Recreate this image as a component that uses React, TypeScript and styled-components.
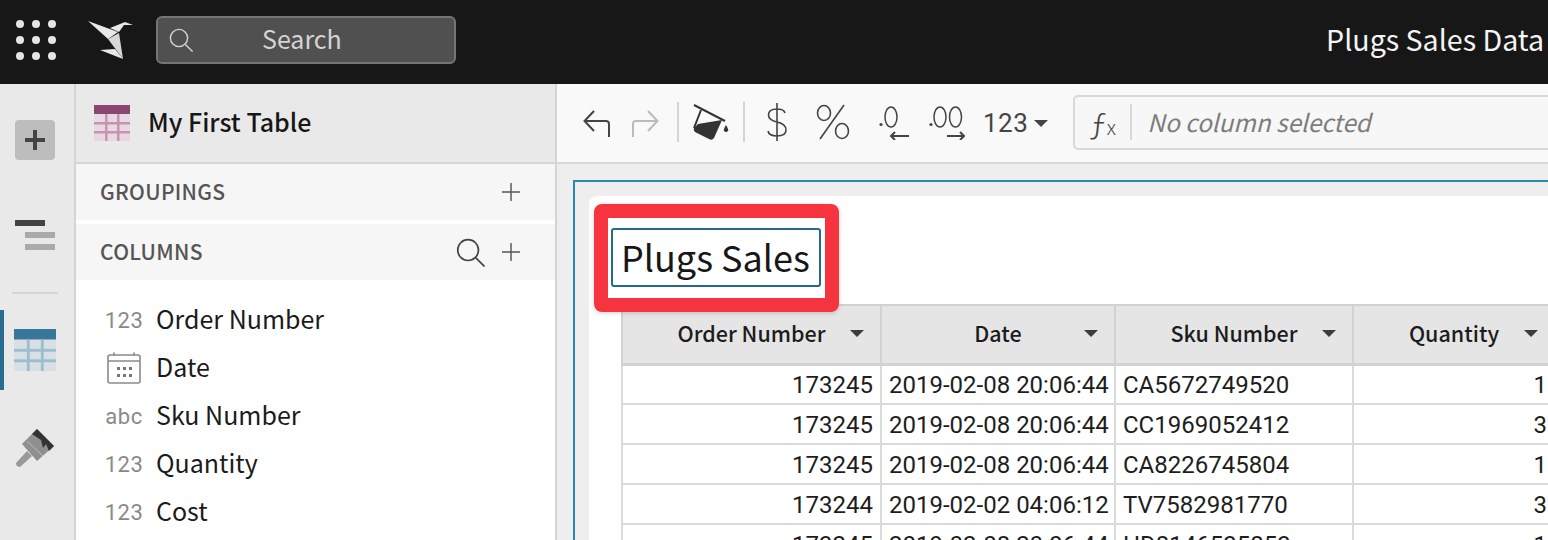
import React from 'react';
import styled, { createGlobalStyle } from 'styled-components';

const SANS = `"Noto Sans CJK JP", "Noto Sans", sans-serif`;
const CELL = `Roboto, "Noto Sans", sans-serif`;

const GlobalStyle = createGlobalStyle`
  html, body {
    margin: 0;
    padding: 0;
    width: 1548px;
    height: 540px;
    overflow: hidden;
    background: #fff;
    font-family: ${SANS};
  }
  * { box-sizing: border-box; }
`;

const Page = styled.div`
  width: 1548px;
  height: 540px;
  display: flex;
  flex-direction: column;
  overflow: hidden;
`;

const TopBar = styled.header`
  height: 84px;
  flex: none;
  background: #171717;
  display: flex;
  align-items: center;
  padding: 0 0 4px 16px;
`;

const SearchBox = styled.div`
  width: 300px;
  height: 48px;
  margin-left: 22px;
  background: #505050;
  border: 2px solid #757575;
  border-radius: 6px;
  display: flex;
  align-items: center;
  padding-left: 11px;
  color: #d4d4d4;
`;

const SearchLabel = styled.span`
  font-size: 25px;
  margin-left: 69px;
  padding-bottom: 4px;
`;

const DocTitle = styled.div`
  margin-left: auto;
  margin-right: 4px;
  padding-bottom: 4px;
  color: #f4f4f4;
  font-size: 28.6px;
  white-space: nowrap;
`;

const Body = styled.div`
  flex: 1;
  display: flex;
  min-height: 0;
`;

const Rail = styled.nav`
  width: 76px;
  flex: none;
  background: #e9e9e9;
  border-right: 2px solid #d4d4d4;
  display: flex;
  flex-direction: column;
  align-items: center;
`;

const AddButton = styled.div`
  width: 40px;
  height: 40px;
  margin-top: 36px;
  margin-right: 4px;
  background: #bdbdbd;
  border-radius: 4px;
  display: flex;
  align-items: center;
  justify-content: center;
`;

const RailIcon = styled.div<{ $top: number }>`
  width: 100%;
  margin-top: ${(p) => p.$top}px;
  padding-right: 4px;
  display: flex;
  justify-content: center;
`;

const RailActive = styled.div`
  width: 100%;
  height: 80px;
  margin-top: 16px;
  padding-right: 8px;
  border-left: 4px solid #2a6d8f;
  display: flex;
  align-items: center;
  justify-content: center;
`;

const RailDivider = styled.div`
  width: 46px;
  height: 2px;
  background: #d6d6d6;
  margin-top: 42px;
  margin-right: 4px;
`;

const Panel = styled.aside`
  width: 481px;
  flex: none;
  background: #fff;
  border-right: 2px solid #d4d4d4;
  display: flex;
  flex-direction: column;
`;

const PanelHeader = styled.div`
  height: 80px;
  flex: none;
  background: #e9e9e9;
  border-bottom: 2px solid #d6d6d6;
  display: flex;
  align-items: center;
  padding-left: 18px;
  gap: 18px;
`;

const PanelTitle = styled.div`
  font-size: 25px;
  font-weight: 500;
  color: #171717;
  padding-bottom: 4px;
`;

const Section = styled.div<{ $gap?: boolean }>`
  height: 56px;
  flex: none;
  background: #f6f6f6;
  display: flex;
  align-items: center;
  padding: 0 35px 0 24px;
  margin-top: ${(p) => (p.$gap ? 4 : 0)}px;
`;

const SectionLabel = styled.div`
  font-size: 21px;
  font-weight: 500;
  letter-spacing: 0.3px;
  color: #555;
  flex: 1;
  padding-bottom: 2px;
`;

const SectionSpacer = styled.span`
  width: 17px;
`;

const ColumnList = styled.ul`
  list-style: none;
  margin: 16px 0 0;
  padding: 0 0 0 29px;
`;

const ColumnRow = styled.li`
  height: 48px;
  display: flex;
  align-items: center;
  gap: 13px;
`;

const TypeTag = styled.span`
  width: 38px;
  font-family: ${CELL};
  font-size: 22px;
  color: #8a8a8a;
  display: flex;
  justify-content: center;
  letter-spacing: 0.5px;
`;

const ColumnName = styled.span`
  font-size: 25px;
  color: #1b1b1b;
  padding-bottom: 4px;
`;

const Main = styled.main`
  flex: 1;
  min-width: 0;
  display: flex;
  flex-direction: column;
  background: #eee;
`;

const Toolbar = styled.div`
  height: 80px;
  flex: none;
  background: #f9f9f9;
  border-bottom: 2px solid #d8d8d8;
  display: flex;
  align-items: center;
  padding-left: 26px;
  padding-bottom: 2px;
`;

const ToolIcon = styled.svg<{ $left: number }>`
  flex: none;
  margin-left: ${(p) => p.$left}px;
`;

const ToolDivider = styled.div<{ $left: number }>`
  width: 2px;
  height: 40px;
  flex: none;
  background: #d4d4d4;
  margin-left: ${(p) => p.$left}px;
`;

const FormatMenu = styled.div`
  margin-left: 18px;
  margin-top: 2px;
  display: flex;
  align-items: center;
  gap: 6px;
  font-family: ${CELL};
  font-size: 26px;
  color: #444;
  letter-spacing: 0.5px;
`;

const Caret = styled.span<{ $color?: string }>`
  width: 0;
  height: 0;
  border-left: 7px solid transparent;
  border-right: 7px solid transparent;
  border-top: 7px solid ${(p) => p.$color ?? '#444'};
`;

const FormulaBar = styled.div`
  width: 520px;
  height: 55px;
  margin-left: 25px;
  flex: none;
  background: #f7f7f7;
  border: 2px solid #d8d8d8;
  border-radius: 5px 0 0 5px;
  display: flex;
  align-items: center;
`;

const FxLabel = styled.div`
  width: 57px;
  height: 36px;
  border-right: 2px solid #d8d8d8;
  display: flex;
  align-items: center;
  justify-content: center;
  font-weight: 300;
  font-size: 32px;
  line-height: 36px;
  color: #444;
`;

const FxSub = styled.span`
  font-size: 20px;
  margin-top: 10px;
`;

const FormulaHint = styled.div`
  font-size: 24.3px;
  font-style: italic;
  color: #7c7c7c;
  margin-left: 15px;
  padding-bottom: 2px;
  white-space: nowrap;
`;

const Canvas = styled.div`
  flex: 1;
  min-height: 0;
  padding: 16px 0 0 16px;
  overflow: hidden;
`;

const SelectedFrame = styled.div`
  height: 100%;
  border: 2px solid #2b87b3;
  border-bottom: none;
  border-right: none;
  padding: 14px 0 0 14px;
`;

const Sheet = styled.div`
  background: #fff;
  height: 100%;
  border-radius: 8px 0 0 0;
  padding: 32px 0 0 32px;
`;

const TitleCallout = styled.div`
  position: relative;
  height: 76px;
  margin-left: -10px;
`;

const TitleInput = styled.div`
  display: inline-block;
  height: 59px;
  padding: 0 9px 0 8px;
  border: 2px solid #236b8e;
  border-radius: 3px;
  font-size: 36px;
  line-height: 53px;
  color: #171717;
  background: #fff;
  white-space: nowrap;
`;

const RedBox = styled.div`
  position: absolute;
  left: -17px;
  top: -24px;
  width: 245px;
  height: 108px;
  border: 14px solid #f63440;
  border-radius: 8px;
  box-shadow: 0 1px 5px rgba(0, 0, 0, 0.18);
  pointer-events: none;
  z-index: 2;
`;

const Grid = styled.table`
  border-collapse: collapse;
  table-layout: fixed;
  width: 933px;
  font-family: ${CELL};
`;

const HeadCell = styled.th<{ $w: number }>`
  width: ${(p) => p.$w}px;
  height: 59px;
  padding: 0;
  background: #e5e5e5;
  border: 2px solid #d2d2d2;
  border-bottom-width: 3px;
  font-family: ${SANS};
  font-size: 21.5px;
  font-weight: 500;
  color: #1c1c1c;
`;

const HeadInner = styled.div`
  display: flex;
  align-items: center;
  justify-content: center;
  position: relative;
  padding-bottom: 3px;
`;

const HeadCaret = styled.div`
  position: absolute;
  right: 16px;
  top: 50%;
  margin-top: -4px;
  display: flex;
`;

const Cell = styled.td<{ $right?: boolean }>`
  height: 40px;
  padding: 1px 7px 0;
  border: 2px solid #dadada;
  font-size: 24px;
  color: #1d1d1d;
  text-align: ${(p) => (p.$right ? 'right' : 'left')};
  white-space: nowrap;
  overflow: hidden;
`;

const columns = [
  { tag: '123', name: 'Order Number' },
  { tag: 'cal', name: 'Date' },
  { tag: 'abc', name: 'Sku Number' },
  { tag: '123', name: 'Quantity' },
  { tag: '123', name: 'Cost' },
];

const heads = [
  { name: 'Order Number', w: 259 },
  { name: 'Date', w: 234 },
  { name: 'Sku Number', w: 238 },
  { name: 'Quantity', w: 202 },
];

const rows = [
  ['173245', '2019-02-08 20:06:44', 'CA5672749520', '1'],
  ['173245', '2019-02-08 20:06:44', 'CC1969052412', '3'],
  ['173245', '2019-02-08 20:06:44', 'CA8226745804', '1'],
  ['173244', '2019-02-02 04:06:12', 'TV7582981770', '3'],
  ['173245', '2019-02-08 20:06:44', 'HD8146535853', '1'],
];

const AppGrid = () => (
  <svg width="40" height="40" viewBox="0 0 40 40" fill="#e6e6e6">
    {[4, 20, 36].map((y) => [4, 20, 36].map((x) => <circle key={`${x}-${y}`} cx={x} cy={y} r="4" />))}
  </svg>
);

const Logo = () => (
  <svg width="46" height="42" viewBox="0 0 46 42" style={{ marginLeft: 32 }}>
    <path d="M0 2 L30 13 L20 20 Z" fill="#e8e8e8" />
    <path d="M20 20 L31 14 L35 40 Z" fill="#d6d6d6" />
    <path d="M22 9 L37 3 L45 6 L36 6 L31 13 Z" fill="#e8e8e8" />
    <path d="M12 31 L27 30 L35 40 Z" fill="#e8e8e8" />
  </svg>
);

const SearchIcon = ({ size, color }: { size: number; color: string }) => (
  <svg width={size} height={size} viewBox="0 0 24 24" fill="none" stroke={color} strokeWidth="1.4">
    <circle cx="10" cy="10" r="8.6" />
    <path d="M16.4 16.4 L23.6 23.6" />
  </svg>
);

const TableIcon = ({ head, line, fill, size }: { head: string; line: string; fill: string; size: number }) => (
  <svg width={size} height={size} viewBox="0 0 36 36">
    <rect y="0" width="36" height="36" fill={fill} />
    <rect y="0" width="36" height="9" fill={head} />
    <rect y="17" width="36" height="2.5" fill={line} />
    <rect y="26" width="36" height="2.5" fill={line} />
    <rect x="11" y="9" width="2.5" height="27" fill={line} />
    <rect x="23" y="9" width="2.5" height="27" fill={line} />
  </svg>
);

const PlusIcon = ({ size, color, width }: { size: number; color: string; width: number }) => (
  <svg width={size} height={size} viewBox="0 0 20 20" stroke={color} strokeWidth={width}>
    <path d="M10 0 V20 M0 10 H20" />
  </svg>
);

const Layers = () => (
  <svg width="40" height="30" viewBox="0 0 40 30">
    <rect x="0" y="0" width="30" height="6" fill="#444" />
    <rect x="10" y="12" width="30" height="6" fill="#aaa" />
    <rect x="10" y="24" width="30" height="6" fill="#aaa" />
  </svg>
);

const Brush = () => (
  <svg width="40" height="40" viewBox="0 0 40 40">
    <path d="M1 35 L12 23 L17 28 L5 39 Q1 39 1 35 Z" fill="#999" />
    <path d="M7 16 L22 1 L39 18 L22 33 Z" fill="#8f8f8f" />
    <path d="M22 1 L39 18 L34 23 L31 16 L28 20 L26 12 L17 6 Z" fill="#333" />
    <path d="M12 13 L28 28" stroke="#bbb" strokeWidth="1" />
  </svg>
);

const CalendarIcon = () => (
  <svg width="34" height="32" viewBox="0 0 34 32" fill="none" stroke="#8a8a8a" strokeWidth="1.6">
    <rect x="1" y="3" width="32" height="28" rx="2" />
    <path d="M1 9 H33 M7 0.5 V4 M27 0.5 V4" />
    <g fill="#777" stroke="none">
      {[10, 16, 22].map((x) => [15, 22].map((y) => <rect key={`${x}-${y}`} x={x} y={y} width="3" height="3" />))}
    </g>
  </svg>
);

const App: React.FC = () => {
  return (
    <Page>
      <GlobalStyle />
      <TopBar>
        <AppGrid />
        <Logo />
        <SearchBox>
          <SearchIcon size={24} color="#d4d4d4" />
          <SearchLabel>Search</SearchLabel>
        </SearchBox>
        <DocTitle>Plugs Sales Data</DocTitle>
      </TopBar>
      <Body>
        <Rail>
          <AddButton>
            <PlusIcon size={20} color="#444" width={4} />
          </AddButton>
          <RailIcon $top={60}>
            <Layers />
          </RailIcon>
          <RailDivider />
          <RailActive>
            <TableIcon size={42} head="#39779a" line="#9dbfcd" fill="#d8e0e6" />
          </RailActive>
          <RailIcon $top={38}>
            <Brush />
          </RailIcon>
        </Rail>
        <Panel>
          <PanelHeader>
            <TableIcon size={36} head="#8b4672" line="#c496b2" fill="#e8d8e3" />
            <PanelTitle>My First Table</PanelTitle>
          </PanelHeader>
          <Section>
            <SectionLabel>GROUPINGS</SectionLabel>
            <PlusIcon size={18} color="#555" width={1.6} />
          </Section>
          <Section $gap>
            <SectionLabel>COLUMNS</SectionLabel>
            <SearchIcon size={29} color="#444" />
            <SectionSpacer />
            <PlusIcon size={18} color="#555" width={1.6} />
          </Section>
          <ColumnList>
            {columns.map((c) => (
              <ColumnRow key={c.name}>
                <TypeTag>{c.tag === 'cal' ? <CalendarIcon /> : c.tag}</TypeTag>
                <ColumnName>{c.name}</ColumnName>
              </ColumnRow>
            ))}
          </ColumnList>
        </Panel>
        <Main>
          <Toolbar>
            <ToolIcon $left={0} width="28" height="30" viewBox="0 0 28 30" fill="none" stroke="#444" strokeWidth="2">
              <path d="M26 30 V17 Q26 14 23 14 H2 M11 4 L1.5 14 L11 24" />
            </ToolIcon>
            <ToolIcon $left={20} width="28" height="30" viewBox="0 0 28 30" fill="none" stroke="#bbb" strokeWidth="2">
              <path d="M2 30 V17 Q2 14 5 14 H26 M17 4 L26.5 14 L17 24" />
            </ToolIcon>
            <ToolDivider $left={18} />
            <ToolIcon $left={14} width="36" height="38" viewBox="0 0 36 38">
              <path d="M1 2 L32 18" stroke="#333" strokeWidth="2" />
              <path d="M8 7 L1 25" fill="none" stroke="#333" strokeWidth="2" />
              <path d="M5 21 L29 17 L21 35 Q19 38 16 36 L2 29 Q0 27 1 25 Z" fill="#333" />
              <path d="M33 22 Q36 27 35 28 Q33 30 31 28 Q30 27 33 22 Z" fill="#333" />
            </ToolIcon>
            <ToolDivider $left={14} />
            <ToolIcon $left={22} width="20" height="38" viewBox="0 0 20 38" fill="none" stroke="#444" strokeWidth="1.6">
              <path d="M10 0 V38 M18 10 Q17 6 10 6 Q1.5 6 1.5 12 Q1.5 17 10 19 Q19 21 19 27 Q19 33 10 33 Q2 33 1 28" />
            </ToolIcon>
            <ToolIcon $left={29} width="34" height="36" viewBox="0 0 34 36" fill="none" stroke="#444" strokeWidth="1.6">
              <ellipse cx="8" cy="9" rx="6.5" ry="7.5" />
              <ellipse cx="26" cy="27" rx="6.5" ry="7.5" />
              <path d="M28 1 L4 35" />
            </ToolIcon>
            <ToolIcon $left={29} width="32" height="36" viewBox="0 0 32 36" fill="none" stroke="#444" strokeWidth="1.5">
              <circle cx="2" cy="20.5" r="1.6" fill="#444" stroke="none" />
              <ellipse cx="12" cy="13" rx="6" ry="10" />
              <path d="M30 32 H12 M16 28 L12 32 L16 36" strokeWidth="2" />
            </ToolIcon>
            <ToolIcon $left={18} width="36" height="36" viewBox="0 0 36 36" fill="none" stroke="#444" strokeWidth="1.5">
              <circle cx="2" cy="20.5" r="1.6" fill="#444" stroke="none" />
              <ellipse cx="11" cy="13" rx="6" ry="10" />
              <ellipse cx="26.5" cy="13" rx="6" ry="10" />
              <path d="M18 32 H35 M31 28 L35 32 L31 36" strokeWidth="2" />
            </ToolIcon>
            <FormatMenu>
              123
              <Caret />
            </FormatMenu>
            <FormulaBar>
              <FxLabel>
                ƒ<FxSub>x</FxSub>
              </FxLabel>
              <FormulaHint>No column selected</FormulaHint>
            </FormulaBar>
          </Toolbar>
          <Canvas>
            <SelectedFrame>
              <Sheet>
                <TitleCallout>
                  <TitleInput>Plugs Sales</TitleInput>
                  <RedBox />
                </TitleCallout>
                <Grid>
                  <thead>
                    <tr>
                      {heads.map((h) => (
                        <HeadCell key={h.name} $w={h.w}>
                          <HeadInner>
                            {h.name}
                            <HeadCaret>
                              <Caret $color="#3c3c3c" />
                            </HeadCaret>
                          </HeadInner>
                        </HeadCell>
                      ))}
                    </tr>
                  </thead>
                  <tbody>
                    {rows.map((r, i) => (
                      <tr key={i}>
                        <Cell $right>{r[0]}</Cell>
                        <Cell>{r[1]}</Cell>
                        <Cell>{r[2]}</Cell>
                        <Cell $right>{r[3]}</Cell>
                      </tr>
                    ))}
                  </tbody>
                </Grid>
              </Sheet>
            </SelectedFrame>
          </Canvas>
        </Main>
      </Body>
    </Page>
  );
};

export default App;
